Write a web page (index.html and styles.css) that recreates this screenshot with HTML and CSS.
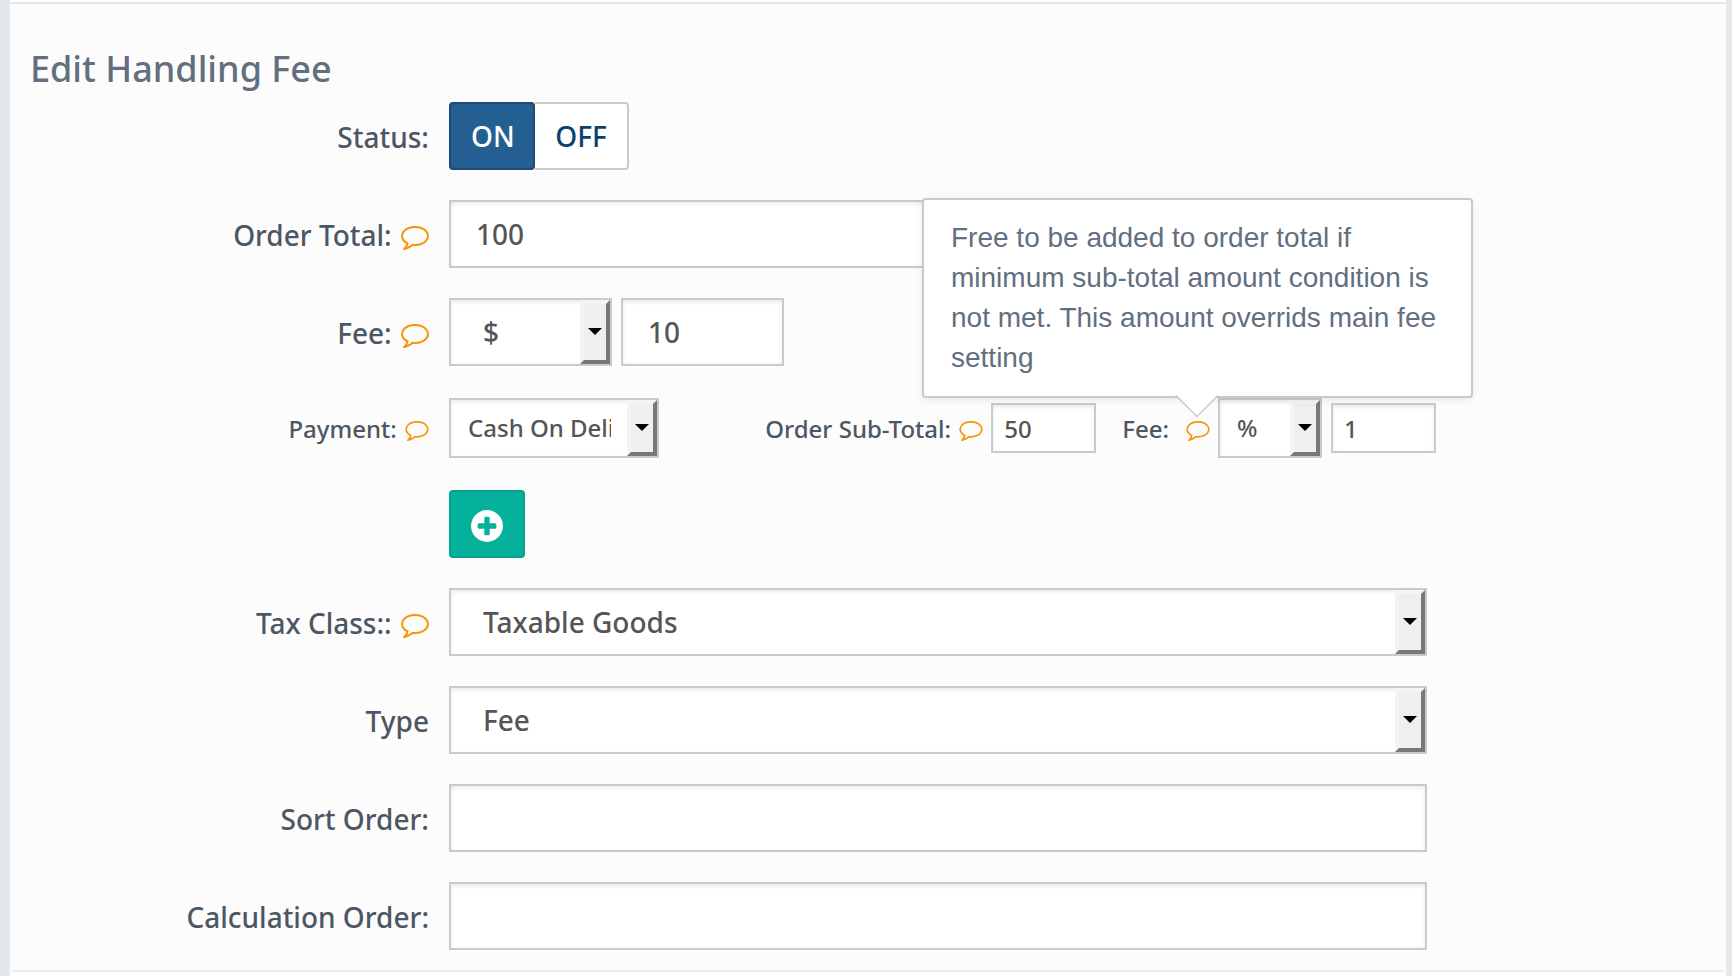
FILE: index.html
```html
<!DOCTYPE html>
<html lang="en">
<head>
<meta charset="utf-8">
<title>Edit Handling Fee</title>
<link rel="stylesheet" href="styles.css">
</head>
<body>
<svg class="sprite" aria-hidden="true">
  <symbol id="comment" viewBox="0 256 1792 1536"><path d="M896 384q-204 0-381.500 69.500t-282 187.500-104.500 255q0 112 71.500 213.500t201.500 175.500l87 50-27 96q-24 91-70 172 152-63 275-171l43-38 57 6q69 8 130 8 204 0 381.500-69.500t282-187.500 104.500-255-104.500-255-282-187.500-381.500-69.500zm896 512q0 174-120 321.500t-326 233-450 85.500q-70 0-145-8-198 175-460 242-49 14-114 22h-5q-15 0-27-10.500t-16-27.500v-1q-3-4-.5-12t2-10 4.500-9.500l6-9 7-8.500 8-9q7-8 31-34.500t34.500-38 31-39.500 32.500-51 27-59 26-76q-157-89-247.500-220t-90.500-281q0-174 120-321.500t326-233 450-85.500 450 85.500 326 233 120 321.500z"/></symbol>
</svg>
<main class="panel">
  <h1 class="title">Edit Handling Fee</h1>
  <form class="form">
    <div class="row">
      <span class="label" id="status-label">Status:</span>
      <div class="controls toggle" role="group" aria-labelledby="status-label">
        <button type="button" class="btn btn-on" aria-pressed="true">ON</button>
        <button type="button" class="btn btn-off" aria-pressed="false">OFF</button>
      </div>
    </div>
    <div class="row">
      <label class="label" for="total">Order Total: <svg class="help"><use href="#comment"/></svg></label>
      <div class="controls"><input class="field" id="total" type="text" value="100"></div>
    </div>
    <div class="row">
      <label class="label" for="fee">Fee: <svg class="help"><use href="#comment"/></svg></label>
      <div class="controls">
        <div class="select half"><select class="field" aria-label="Fee type"><option>$</option><option>%</option></select></div>
        <input class="field half" id="fee" type="text" value="10">
      </div>
    </div>
    <div class="row small">
      <label class="label" for="payment">Payment: <svg class="help"><use href="#comment"/></svg></label>
      <div class="controls payment">
        <div class="select method"><select class="field" id="payment"><option>Cash On Delivery</option></select></div>
        <div class="group">
          <label class="inline-label" for="subtotal">Order Sub-Total: <svg class="help"><use href="#comment"/></svg></label>
          <input class="field mini" id="subtotal" type="text" value="50">
        </div>
        <div class="group">
          <label class="inline-label fee-label" for="subfee">Fee:
            <span class="tip-anchor"><svg class="help"><use href="#comment"/></svg>
              <span class="popover" role="tooltip">Free to be added to order total if minimum sub-total amount condition is not met. This amount overrids main fee setting</span>
            </span>
          </label>
          <div class="select unit"><select class="field" aria-label="Payment fee type"><option>%</option><option>$</option></select></div>
          <input class="field mini" id="subfee" type="text" value="1">
        </div>
      </div>
    </div>
    <div class="row">
      <div class="controls add">
        <button type="button" class="btn btn-add" aria-label="Add payment"><svg class="plus" viewBox="128 128 1536 1536"><path d="M1344 960v-128q0-26-19-45t-45-19h-256v-256q0-26-19-45t-45-19h-128q-26 0-45 19t-19 45v256h-256q-26 0-45 19t-19 45v128q0 26 19 45t45 19h256v256q0 26 19 45t45 19h128q26 0 45-19t19-45v-256h256q26 0 45-19t19-45zm320-64q0 209-103 385.500t-279.500 279.500-385.500 103-385.500-103-279.500-279.500-103-385.500 103-385.500 279.500-279.500 385.500-103 385.500 103 279.500 279.500 103 385.500z"/></svg></button>
      </div>
    </div>
    <div class="row">
      <label class="label" for="tax">Tax Class:: <svg class="help"><use href="#comment"/></svg></label>
      <div class="controls"><div class="select"><select class="field" id="tax"><option>Taxable Goods</option></select></div></div>
    </div>
    <div class="row">
      <label class="label" for="type">Type</label>
      <div class="controls"><div class="select"><select class="field" id="type"><option>Fee</option></select></div></div>
    </div>
    <div class="row">
      <label class="label" for="sort">Sort Order:</label>
      <div class="controls"><input class="field" id="sort" type="text"></div>
    </div>
    <div class="row">
      <label class="label" for="calc">Calculation Order:</label>
      <div class="controls"><input class="field" id="calc" type="text"></div>
    </div>
  </form>
</main>
</body>
</html>
```
FILE: styles.css
```css
*, *::before, *::after { box-sizing: border-box; }
html { background: #fff; }
body {
  margin: 0;
  padding-top: 2px;
  min-height: 100vh;
  border-left: 10px solid #e3e8eb;
  border-right: 6px solid #e3e8eb;
  background: #fff;
  color: #4d5663;
  font: 500 28px/40px "Noto Sans", "Open Sans", sans-serif;
}
.sprite { display: none; }
.panel {
  padding: 40px 20px 20px;
  border-top: 2px solid #e6e8e8;
  border-bottom: 2px solid #ebeded;
  border-radius: 0 0 4px 4px;
  background: #fcfcfc;
}
.title {
  margin: 0;
  padding-bottom: 8px;
  color: #626f7f;
  font-size: 36px;
  line-height: 50px;
  font-weight: 500;
}
.form { display: flex; flex-direction: column; gap: 30px; }
.row {
  display: grid;
  grid-template-columns: 399fr 978fr 259fr;
  column-gap: 20px;
  align-items: center;
}
.label { padding-top: 2px; text-align: right; white-space: nowrap; }
.controls { display: flex; align-items: center; gap: 9px; min-width: 0; }
.add { grid-column: 2; }
.help {
  width: 28px;
  height: 24px;
  margin-left: 2px;
  fill: #f89406;
  vertical-align: -4px;
}
.field {
  display: block;
  width: 100%;
  height: 68px;
  margin: 0;
  padding: 0 25px;
  border: 2px solid #cacaca;
  border-radius: 0;
  background: #fff;
  box-shadow: inset 0 2px 4px rgba(0, 0, 0, .09);
  color: #555;
  font: inherit;
  outline: 0;
}
select.field { appearance: none; padding: 0 40px 0 32px; }
.select { position: relative; width: 100%; }
.select::before {
  content: "";
  position: absolute;
  top: 2px;
  right: 2px;
  bottom: 2px;
  width: 30px;
  border: 4px solid;
  border-color: #f4f4f4 #777 #777 #f4f4f4;
  background: #efefef;
  pointer-events: none;
}
.select::after {
  content: "";
  position: absolute;
  top: calc(50% - 4px);
  right: 10px;
  border: 7px solid transparent;
  border-top-color: #000;
  border-bottom: 0;
  pointer-events: none;
}
.half { width: 163px; }
.btn {
  height: 68px;
  padding: 0 20px;
  border: 2px solid #cacaca;
  border-radius: 4px;
  background: #fff;
  font: inherit;
}
.toggle { gap: 0; }
.btn-on { width: 86px; border-color: #1b4b78; background: #245f92; color: #fff; }
.btn-off { width: 94px; border-left: 0; border-radius: 0 4px 4px 0; color: #0a416e; }
.btn-add { width: 76px; padding-top: 3px; border-color: #04a28d; background: #04b19a; }
.plus { display: block; width: 32px; height: 32px; fill: #fff; }
.small { min-height: 64px; font-size: 24px; }
.small .help { width: 24px; height: 20px; vertical-align: -3px; }
.payment { gap: 26px; }
.small select.field { height: 60px; padding: 0 46px 0 17px; }
.small input.field { height: 50px; padding: 0 11px; }
.small .mini { width: 105px; flex: none; }
.small .unit { width: 104px; flex: none; margin-right: 1px; }
.method { width: 210px; flex: none; margin-right: auto; }
.group { display: flex; align-items: center; gap: 8px; white-space: nowrap; }
.group:last-child { margin-right: -9px; }
.inline-label { padding-top: 2px; }
.fee-label { display: flex; gap: 15px; }
.tip-anchor { position: relative; }
.popover {
  position: absolute;
  z-index: 2;
  right: -263px;
  bottom: 51px;
  width: 551px;
  padding: 18px 27px 18px;
  border: 2px solid #c9c9c9;
  border-radius: 4px;
  background: #fff;
  box-shadow: 0 2px 8px rgba(0, 0, 0, .08);
  color: #626f7f;
  font: 28px/40px "Liberation Sans", Arial, sans-serif;
  text-align: left;
  white-space: normal;
}
.popover::after {
  content: "";
  position: absolute;
  top: calc(100% - 15px);
  left: 258px;
  width: 30px;
  height: 30px;
  border: 1px solid #bbb;
  border-width: 0 1px 1px 0;
  background: linear-gradient(135deg, transparent 50%, #fff 50%);
  transform: rotate(45deg);
}
```
